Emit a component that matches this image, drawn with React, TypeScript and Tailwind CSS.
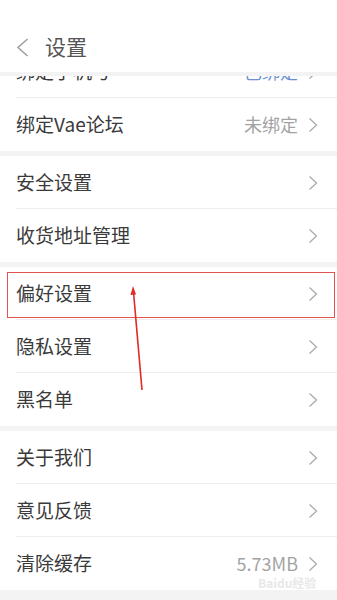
import React from "react";

type Row = {
  label: string;
  value?: string;
  valueClass?: string;
  highlight?: boolean;
};

const sections: Row[][] = [
  [
    { label: "绑定手机号", value: "已绑定", valueClass: "text-[#6b8fd6]" },
    { label: "绑定Vae论坛", value: "未绑定" },
  ],
  [{ label: "安全设置" }, { label: "收货地址管理" }],
  [{ label: "偏好设置", highlight: true }, { label: "隐私设置" }, { label: "黑名单" }],
  [{ label: "关于我们" }, { label: "意见反馈" }, { label: "清除缓存", value: "5.73MB" }],
];

function Chevron() {
  return (
    <svg width="10" height="16" viewBox="0 0 10 16" fill="none" className="shrink-0">
      <path d="M1.5 1.5 L8.5 8 L1.5 14.5" stroke="#ababab" strokeWidth="1.3" />
    </svg>
  );
}

function SettingRow({ row, last }: { row: Row; last: boolean }) {
  return (
    <div className="relative h-[53px] bg-white">
      <div className="flex h-full items-center justify-between pl-4 pr-[19px]">
        <span className="text-[19px] text-[#3a3a3a]">{row.label}</span>
        <div className="flex items-center gap-[10px]">
          {row.value && (
            <span className={`text-[18px] ${row.valueClass ?? "text-[#a3a3a3]"}`}>{row.value}</span>
          )}
          <Chevron />
        </div>
      </div>
      {!last && <div className="absolute bottom-0 left-4 right-0 h-px bg-[#ededed]" />}
      {row.highlight && (
        <div className="pointer-events-none absolute left-[7px] right-[2px] top-[5px] bottom-[2px] border border-[#e0534f]" />
      )}
    </div>
  );
}

export default function App() {
  return (
    <div
      className="relative h-[600px] w-[337px] overflow-hidden bg-[#f3f3f3]"
      style={{ fontFamily: '"Noto Sans CJK SC", "Noto Sans", sans-serif' }}
    >
      {/* Header */}
      <div className="relative z-10 flex h-[72px] items-end bg-white pb-[12px] pl-4">
        <svg width="13" height="19" viewBox="0 0 13 19" fill="none" className="mb-[3px]">
          <path d="M11.5 1 L2 9.5 L11.5 18" stroke="#9a9a9a" strokeWidth="1.4" />
        </svg>
        <span className="ml-[16px] text-[21px] leading-[28px] text-[#555]">设置</span>
      </div>

      {/* List, scrolled under the header */}
      <div className="mt-[4px] h-[524px] overflow-hidden">
        <div className="-mt-[31px] flex flex-col gap-[5px]">
          {sections.map((rows, i) => (
            <div key={i} className="bg-white">
              {rows.map((row, j) => (
                <SettingRow key={row.label} row={row} last={j === rows.length - 1} />
              ))}
            </div>
          ))}
        </div>
      </div>

      {/* Annotation arrow */}
      <svg className="pointer-events-none absolute left-0 top-0" width="337" height="600">
        <line x1="142" y1="390" x2="133.5" y2="292" stroke="#e02a22" strokeWidth="1.6" />
        <path d="M133 286 L130.5 295 L136 294.5 Z" fill="#e02a22" />
      </svg>

      {/* Watermark */}
      <div className="pointer-events-none absolute left-[258px] top-[577px] text-[12px] font-bold leading-none text-[#e8e8e8]">
        Baidu经验
      </div>
    </div>
  );
}
